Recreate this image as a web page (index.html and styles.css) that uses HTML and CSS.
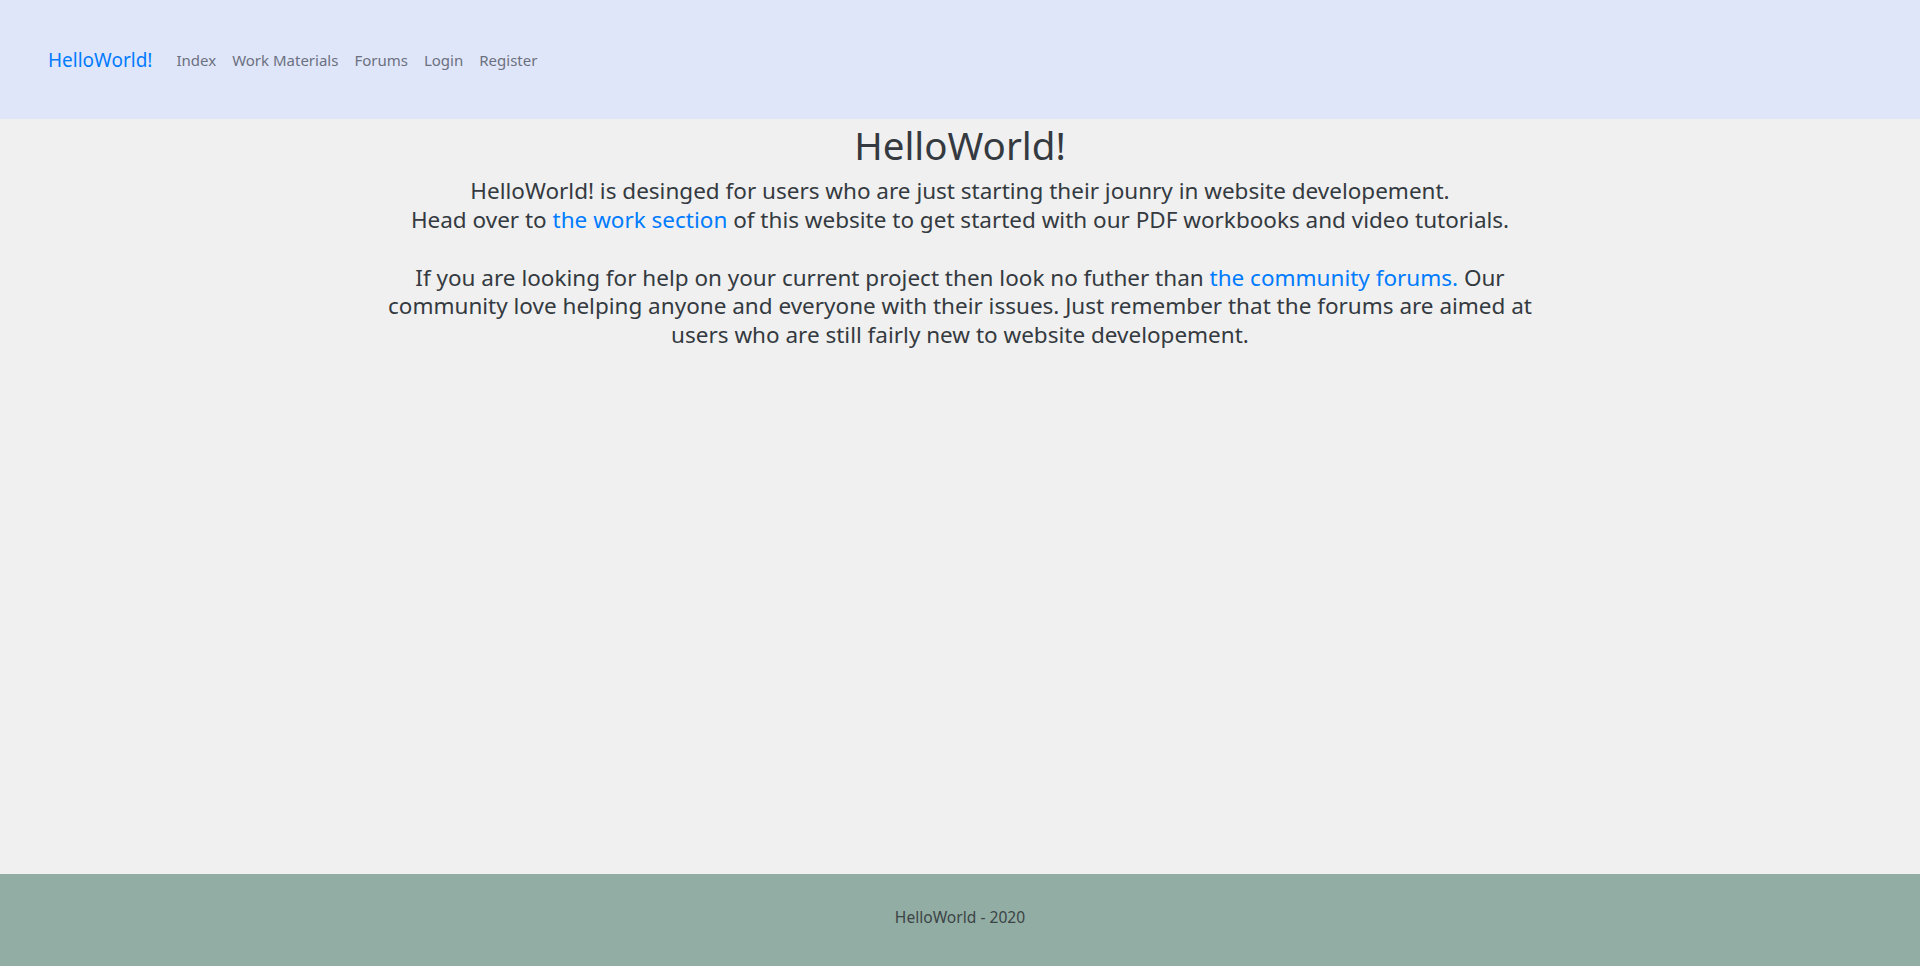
FILE: index.html
```html
<!DOCTYPE html>
<html lang="en">
<head>
<meta charset="utf-8">
<title>HelloWorld!</title>
<link rel="stylesheet" href="styles.css">
</head>
<body>
<div class="page">
  <header class="navbar">
    <a class="brand" href="#">HelloWorld!</a>
    <nav class="nav">
      <a class="nav-link" href="#">Index</a>
      <a class="nav-link" href="#">Work Materials</a>
      <a class="nav-link" href="#">Forums</a>
      <a class="nav-link" href="#">Login</a>
      <a class="nav-link" href="#">Register</a>
    </nav>
  </header>
  <main class="main">
    <h1 class="title">HelloWorld!</h1>
    <p class="lead">HelloWorld! is desinged for users who are just starting their jounry in website developement.<br>Head over to <a href="#" class="link">the work section</a> of this website to get started with our PDF workbooks and video tutorials.</p>
    <p class="lead">If you are looking for help on your current project then look no futher than <a href="#" class="link">the community forums.</a> Our community love helping anyone and everyone with their issues. Just remember that the forums are aimed at users who are still fairly new to website developement.</p>
  </main>
  <footer class="footer">HelloWorld - 2020</footer>
</div>
</body>
</html>
```
FILE: styles.css
```css
* { box-sizing: border-box; }
html, body { margin: 0; padding: 0; }
body {
  font-family: "Noto Sans", "Open Sans", sans-serif;
  color: #343a40;
  background: #f0f0f0;
}
.page {
  min-height: 966px;
  display: flex;
  flex-direction: column;
}
.navbar {
  height: 119px;
  background: #e0e6f9;
  display: flex;
  align-items: center;
  padding: 0 48px;
}
.brand {
  font-size: 19px;
  color: #007bff;
  text-decoration: none;
  margin-right: 24px;
}
.nav { display: flex; gap: 16px; }
.nav-link {
  font-size: 15px;
  color: #6b7080;
  text-decoration: none;
}
.main {
  flex: 1;
  text-align: center;
  width: 1160px;
  margin: 0 auto;
}
.title {
  font-size: 38.5px;
  font-weight: 400;
  line-height: 1.2;
  margin: 3px 0 9px;
}
.lead {
  font-size: 22.5px;
  line-height: 28.8px;
  margin: 0 0 28.8px;
}
.link { color: #007bff; text-decoration: none; }
.footer {
  height: 92px;
  background: #92ada4;
  display: flex;
  align-items: center;
  justify-content: center;
  padding-bottom: 7px;
  font-size: 15.6px;
  color: #3c4446;
}
```
